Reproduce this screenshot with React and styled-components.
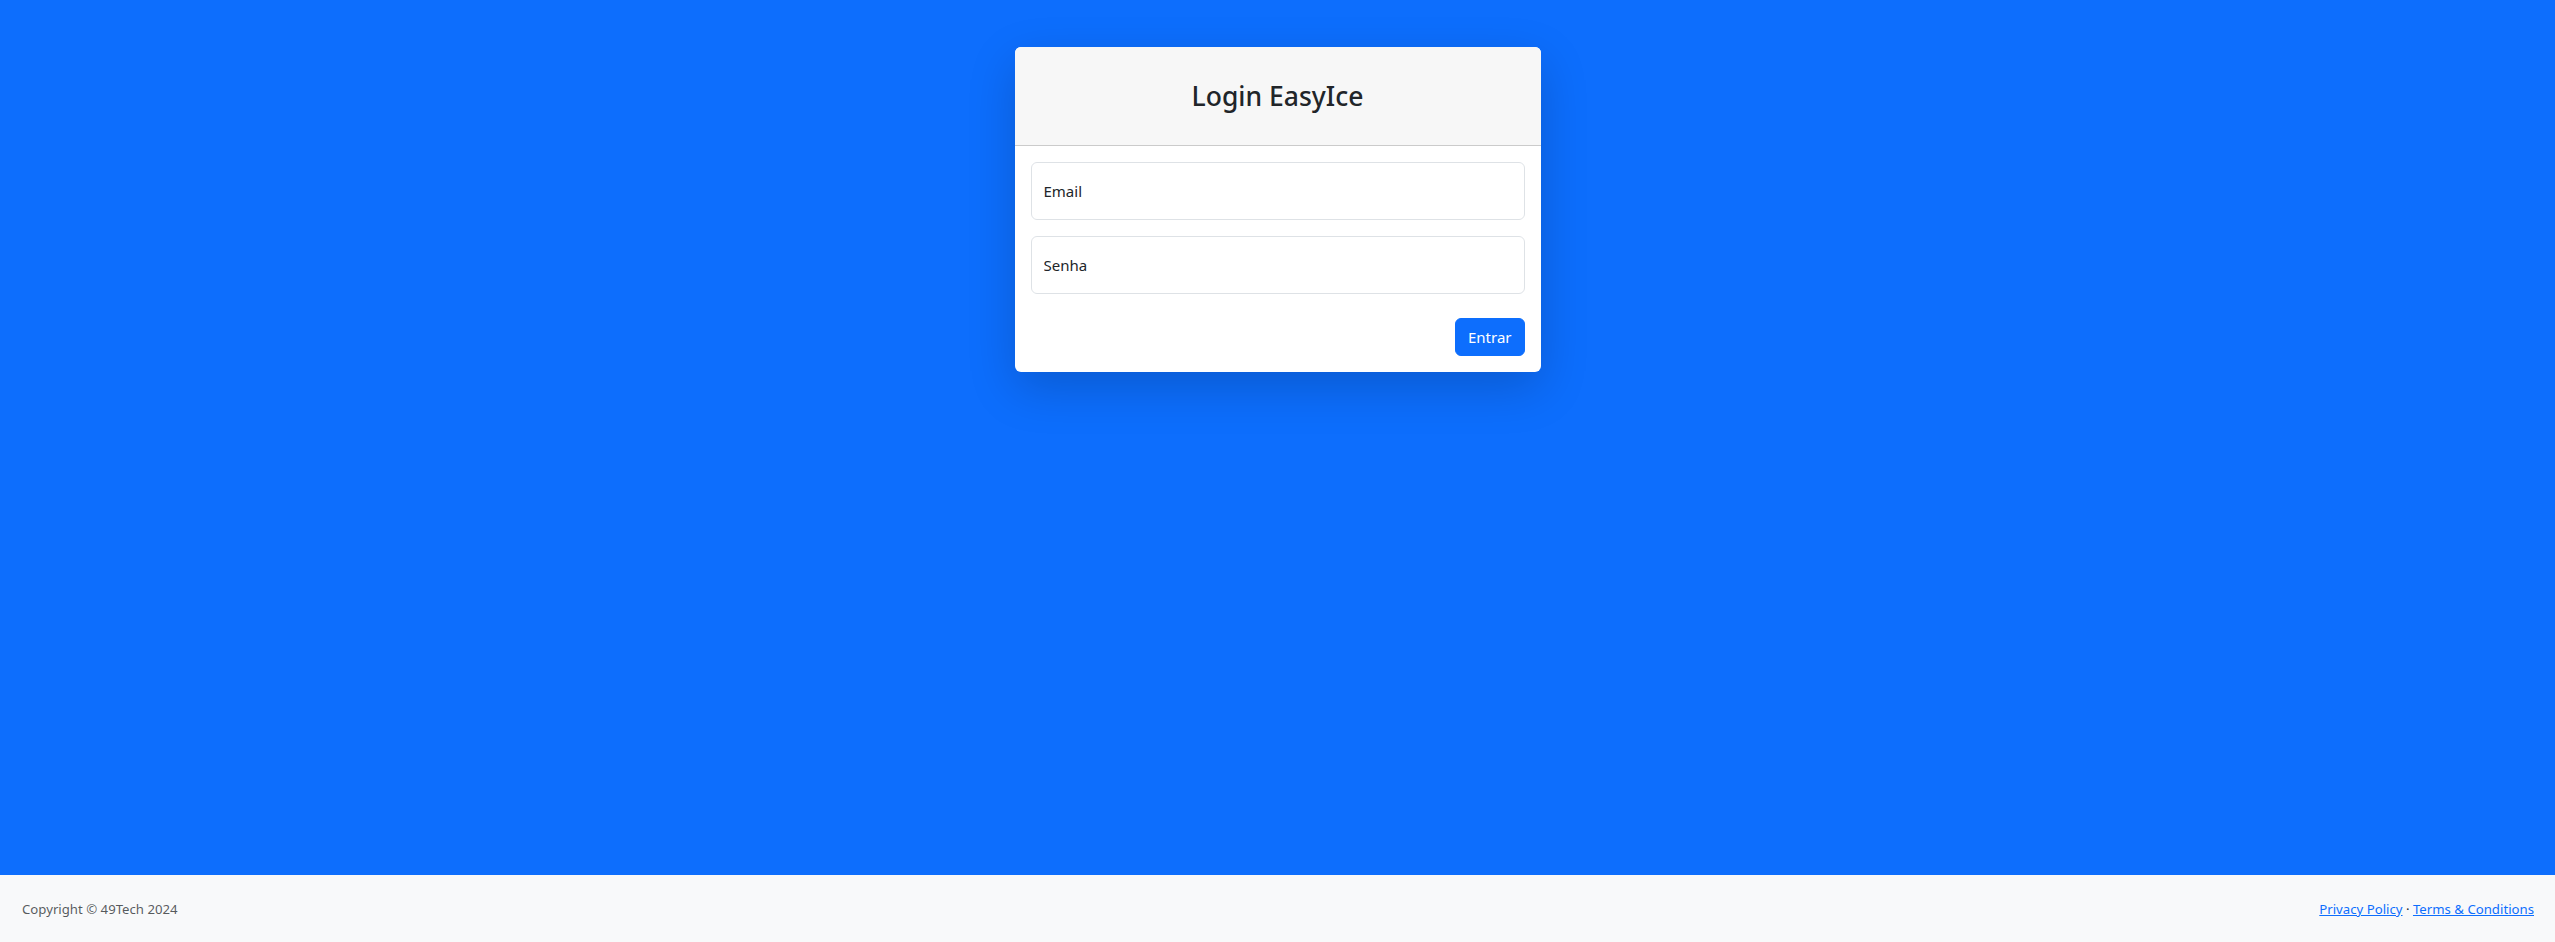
import React from 'react';
import styled, { createGlobalStyle } from 'styled-components';

/*                                   UI ELEMENTS                              */

const GlobalStyle = createGlobalStyle`
  html, body {
    margin: 0;
    padding: 0;
  }
  body {
    font-family: "Noto Sans", "Open Sans", "Liberation Sans", sans-serif;
    font-size: 15px;
    line-height: 24px;
    color: #212529;
    background-color: #0d6efd;
  }
  * {
    box-sizing: border-box;
  }
`

// PAGE LAYOUT
const Layout = styled.div`
  display: flex;
  flex-direction: column;
  min-height: 100vh;
`

const Main = styled.main`
  flex: 1 0 auto;
  display: flex;
  justify-content: center;
`

const Column = styled.div`
  width: 526px;
`

// LOGIN CARD
const Card = styled.div`
  margin-top: 47px;
  background-color: #fff;
  border-radius: 6px;
  box-shadow: 0 16px 48px rgba(0, 0, 0, 0.175);
  overflow: hidden;
`

const CardHeader = styled.div`
  padding: 8px 16px;
  background-color: #f7f7f7;
  border-bottom: 1px solid rgba(0, 0, 0, 0.175);
`

const Title = styled.h3`
  margin: 25px 0 23px;
  text-align: center;
  font-size: 26.5px;
  font-weight: 500;
  line-height: 33.6px;
  color: #212529;
`

const CardBody = styled.form`
  padding: 16px;
  display: flex;
  flex-direction: column;
`

const Field = styled.div`
  margin-bottom: ${p => (p.last ? '0' : '16px')};
`

const Input = styled.input`
  display: block;
  width: 100%;
  height: 58px;
  padding: 16px 12px;
  font-family: inherit;
  font-size: 15px;
  color: #212529;
  background-color: #fff;
  border: 1px solid #dee2e6;
  border-radius: 6px;
  outline: none;

  &::placeholder {
    color: #212529;
  }
`

const Actions = styled.div`
  display: flex;
  justify-content: flex-end;
  align-items: center;
  margin-top: 24px;
`

const Button = styled.button`
  font-family: inherit;
  font-size: 15px;
  line-height: 24px;
  padding: 6px 12px;
  color: #fff;
  background-color: #0d6efd;
  border: 1px solid #0d6efd;
  border-radius: 6px;
  cursor: pointer;
`

// FOOTER
const Footer = styled.footer`
  background-color: #f8f9fa;
  padding: 24px 21px 22px 22px;
  display: flex;
  justify-content: space-between;
  align-items: center;
  font-size: 13.2px;
  line-height: 21px;
`

const Muted = styled.div`
  color: rgba(33, 37, 41, 0.75);
`

const Link = styled.a`
  color: #0d6efd;
  text-decoration: underline;
`

/*                            END OF UI ELEMENTS                              */

export default function App() {
  return (
    <>
      <GlobalStyle />
      <Layout>
        <Main>
          <Column>
            <Card>
              <CardHeader>
                <Title>Login EasyIce</Title>
              </CardHeader>
              <CardBody onSubmit={e => e.preventDefault()}>
                <Field>
                  <Input type="email" placeholder="Email" />
                </Field>
                <Field last>
                  <Input type="password" placeholder="Senha" />
                </Field>
                <Actions>
                  <Button type="submit">Entrar</Button>
                </Actions>
              </CardBody>
            </Card>
          </Column>
        </Main>
        <Footer>
          <Muted>Copyright &copy; 49Tech 2024</Muted>
          <div>
            <Link href="#">Privacy Policy</Link>
            {' '}&middot;{' '}
            <Link href="#">Terms &amp; Conditions</Link>
          </div>
        </Footer>
      </Layout>
    </>
  );
}
